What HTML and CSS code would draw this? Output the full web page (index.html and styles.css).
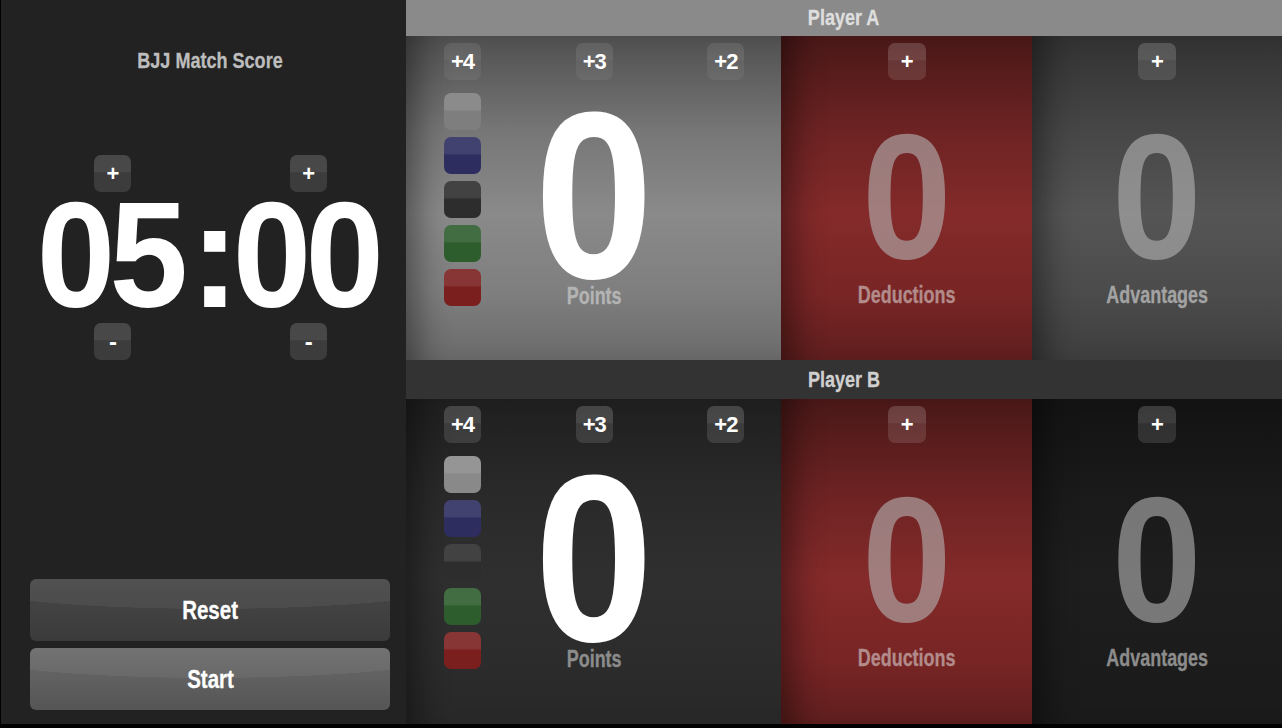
FILE: index.html
```html
<!DOCTYPE html>
<html lang="en">
<head>
<meta charset="utf-8">
<title>BJJ Match Score</title>
<link rel="stylesheet" href="styles.css">
</head>
<body>
<div class="app">
  <aside class="side">
    <h1 class="title">BJJ Match Score</h1>
    <div class="timer">
      <div class="tgroup first">
        <button class="sq">+</button>
        <span class="digits">05</span>
        <button class="sq minus">-</button>
      </div>
      <span class="colon">:</span>
      <div class="tgroup second">
        <button class="sq">+</button>
        <span class="digits">00</span>
        <button class="sq minus">-</button>
      </div>
    </div>
    <div class="actions">
      <button class="big reset"><span class="cond">Reset</span></button>
      <button class="big start"><span class="cond">Start</span></button>
    </div>
  </aside>
  <main class="board">
    <div class="phead head-a"><span class="cond">Player A</span></div>
    <div class="prow row-a">
      <section class="cell points">
        <div class="ptop">
          <button class="sq">+4</button>
          <button class="sq">+3</button>
          <button class="sq">+2</button>
        </div>
        <div class="pbody">
          <div class="belts">
            <span class="belt white"></span>
            <span class="belt blue"></span>
            <span class="belt black"></span>
            <span class="belt green"></span>
            <span class="belt red"></span>
          </div>
          <div class="score">
            <div class="num big-num">0</div>
            <div class="lbl">Points</div>
          </div>
        </div>
      </section>
      <section class="cell ded">
        <button class="sq plus">+</button>
        <div class="num sm-num">0</div>
        <div class="lbl">Deductions</div>
      </section>
      <section class="cell adv">
        <button class="sq plus">+</button>
        <div class="num sm-num">0</div>
        <div class="lbl">Advantages</div>
      </section>
    </div>
    <div class="phead head-b"><span class="cond">Player B</span></div>
    <div class="prow row-b">
      <section class="cell points">
        <div class="ptop">
          <button class="sq">+4</button>
          <button class="sq">+3</button>
          <button class="sq">+2</button>
        </div>
        <div class="pbody">
          <div class="belts">
            <span class="belt white"></span>
            <span class="belt blue"></span>
            <span class="belt black"></span>
            <span class="belt green"></span>
            <span class="belt red"></span>
          </div>
          <div class="score">
            <div class="num big-num">0</div>
            <div class="lbl">Points</div>
          </div>
        </div>
      </section>
      <section class="cell ded">
        <button class="sq plus">+</button>
        <div class="num sm-num">0</div>
        <div class="lbl">Deductions</div>
      </section>
      <section class="cell adv">
        <button class="sq plus">+</button>
        <div class="num sm-num">0</div>
        <div class="lbl">Advantages</div>
      </section>
    </div>
  </main>
</div>
</body>
</html>
```
FILE: styles.css
```css
* { box-sizing: border-box; }
html, body {
  margin: 0;
  padding: 0;
  background: #000;
  width: 1282px;
  height: 728px;
  overflow: hidden;
  font-family: "Liberation Sans", Arial, sans-serif;
  font-weight: bold;
}
button {
  font-family: inherit;
  font-weight: bold;
  cursor: pointer;
  padding: 0;
  border: 0;
}
.cond {
  display: inline-block;
  transform: scaleX(.82);
  -webkit-text-stroke: .3px currentColor;
}
.app {
  display: flex;
  height: 724px;
  padding-left: 1px;
}

/* ---------- left side ---------- */
.side {
  width: 405px;
  flex: none;
  background: #222;
  display: flex;
  flex-direction: column;
  padding: 48px 16px 14px 29px;
}
.title {
  margin: 0;
  font-size: 22px;
  line-height: 26px;
  text-align: center;
  color: #bdbdbd;
  font-weight: bold;
  transform: scaleX(.82);
  -webkit-text-stroke: .3px currentColor;
}
.timer {
  margin-top: 81px;
  display: flex;
  align-items: flex-start;
}
.tgroup {
  display: flex;
  flex-direction: column;
  align-items: center;
}
.tgroup.first { margin-left: 2px; }
.digits, .colon {
  font-size: 150px;
  line-height: 120px;
  color: #fff;
}
.digits {
  margin: 3px 0 8px;
  letter-spacing: -6px;
  padding-right: 6px;
  transform: scaleX(.94);
}
.colon {
  margin: 40px -12px 0 -3px;
}
.sq {
  width: 37px;
  height: 37px;
  border-radius: 7px;
  color: #fff;
  font-size: 22px;
  line-height: 37px;
  letter-spacing: -1px;
  background:
    linear-gradient(rgba(255,255,255,.06) 0 45%, rgba(255,255,255,0) 48%),
    rgba(255,255,255,.12);
}
.minus { font-size: 24px; }
.actions {
  margin-top: auto;
  display: flex;
  flex-direction: column;
  gap: 7px;
}
.big {
  height: 62px;
  border-radius: 6px;
  color: #fff;
  font-size: 25px;
}
.reset {
  background:
    radial-gradient(265px 30px at 50% 0, rgba(255,255,255,.05) 99%, rgba(255,255,255,0) 100%),
    linear-gradient(#484848, #3b3b3b);
}
.start {
  background:
    radial-gradient(265px 30px at 50% 0, rgba(255,255,255,.05) 99%, rgba(255,255,255,0) 100%),
    linear-gradient(#6b6b6b, #555);
}

/* ---------- board ---------- */
.board {
  flex: 1;
  display: grid;
  grid-template-rows: 36px 324px 39px 325px;
}
.phead {
  text-align: center;
  font-size: 22px;
  line-height: 36px;
}
.head-a { background: #8a8a8a; color: #dedede; }
.head-b { background: #333; color: #d0d0d0; line-height: 39px; }
.prow {
  display: grid;
  grid-template-columns: 3fr 2fr 2fr;
}
.cell {
  padding-top: 7px;
  box-shadow: inset 34px 0 34px -24px rgba(0,0,0,.45);
}
.points { padding-left: 38px; padding-right: 37px; }
.ptop {
  display: flex;
  justify-content: space-between;
}
.row-a .points .sq {
  background:
    linear-gradient(rgba(255,255,255,.03) 0 45%, rgba(255,255,255,0) 48%),
    rgba(255,255,255,.06);
}
.pbody {
  margin-top: 13px;
  display: grid;
  grid-template-columns: 37px 1fr 37px;
}
.belts {
  display: flex;
  flex-direction: column;
  gap: 7px;
}
.belt {
  width: 37px;
  height: 37px;
  border-radius: 7px;
  background-image: linear-gradient(rgba(255,255,255,.1) 0 44%, rgba(255,255,255,0) 50%);
}
.belt.white { background-color: #7e7e7e; }
.row-b .belt.white { background-color: #898989; }
.belt.blue { background-color: #2d2d60; }
.belt.black { background-color: #2d2d2d; }
.belt.green { background-color: #2d5c2d; }
.belt.red { background-color: #7b1e1e; }

.score {
  display: flex;
  flex-direction: column;
  align-items: center;
}
.num {
  text-align: center;
  transform: scaleX(.9);
}
.big-num {
  font-size: 237px;
  line-height: 178px;
  margin-top: 14px;
  color: #fff;
}
.lbl {
  font-size: 23px;
  line-height: 20px;
  text-align: center;
  transform: scaleX(.78);
  -webkit-text-stroke: .3px currentColor;
}
.big-num + .lbl { margin-top: 1px; }

.ded, .adv {
  display: flex;
  flex-direction: column;
  align-items: center;
}
.plus { width: 38px; }
.sm-num {
  font-size: 179px;
  line-height: 134px;
  margin-top: 49px;
  color: rgba(181,181,181,.6);
}
.sm-num + .lbl { margin-top: 22px; }

.row-a .points {
  background: linear-gradient(#505050 0%, #777 30%, #8a8a8a 55%, #7e7e7e 80%, #6a6a6a 100%);
}
.row-a .points .lbl { color: #b4b4b4; }
.ded {
  background: linear-gradient(#4a1818 0%, #6e2323 30%, #842a2a 55%, #792525 80%, #5f1e1e 100%);
}
.ded .lbl { color: #b28b8b; }
.row-a .adv {
  background: linear-gradient(#323232 0%, #474747 30%, #555 55%, #4b4b4b 80%, #3e3e3e 100%);
}
.row-a .adv .lbl { color: #a3a3a3; }
.row-b .points {
  background: linear-gradient(#1f1f1f 0%, #2a2a2a 30%, #2f2f2f 55%, #2c2c2c 80%, #282828 100%);
}
.row-b .points .lbl { color: #8c8c8c; }
.row-b .adv {
  background: linear-gradient(#131313 0%, #1a1a1a 30%, #1e1e1e 55%, #1c1c1c 80%, #1a1a1a 100%);
}
.row-b .adv .lbl { color: #8c8c8c; }
```
